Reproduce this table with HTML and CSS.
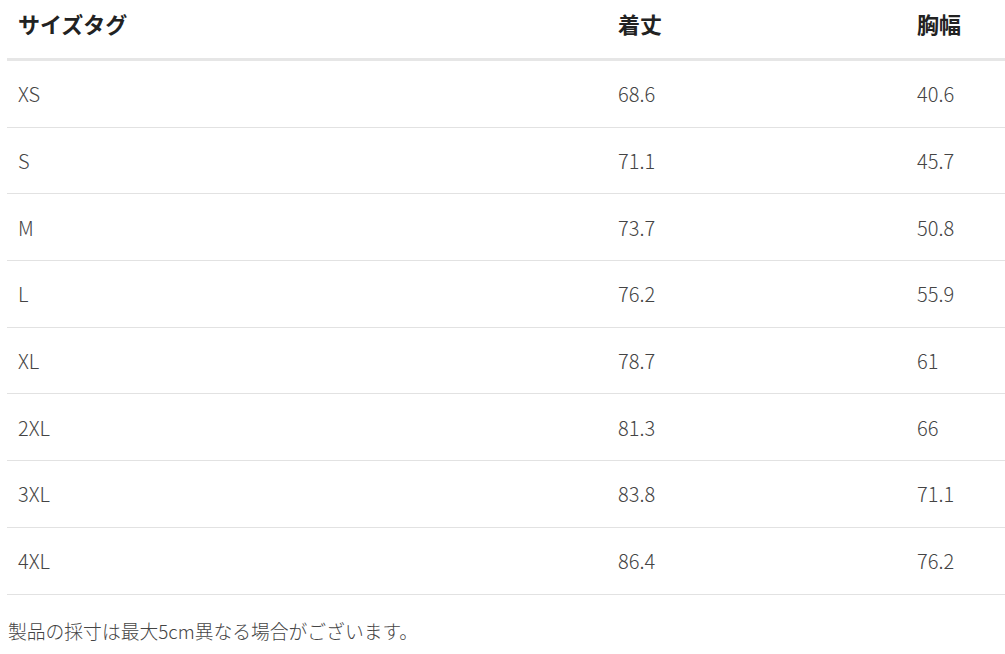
FILE: index.html
```html
<!DOCTYPE html>
<html lang="ja">
<head>
<meta charset="utf-8">
<link rel="stylesheet" href="styles.css">
</head>
<body>
<div class="wrap">
  <table class="size-table">
    <thead>
      <tr><th class="c1">サイズタグ</th><th class="c2">着丈</th><th class="c3">胸幅</th></tr>
    </thead>
    <tbody>
      <tr><td>XS</td><td>68.6</td><td>40.6</td></tr>
      <tr><td>S</td><td>71.1</td><td>45.7</td></tr>
      <tr><td>M</td><td>73.7</td><td>50.8</td></tr>
      <tr><td>L</td><td>76.2</td><td>55.9</td></tr>
      <tr><td>XL</td><td>78.7</td><td>61</td></tr>
      <tr><td>2XL</td><td>81.3</td><td>66</td></tr>
      <tr><td>3XL</td><td>83.8</td><td>71.1</td></tr>
      <tr><td>4XL</td><td>86.4</td><td>76.2</td></tr>
    </tbody>
  </table>
  <p class="note">製品の採寸は最大5cm異なる場合がございます。</p>
</div>
</body>
</html>
```
FILE: styles.css
```css
html, body {
  margin: 0;
  padding: 0;
  background: #fff;
  overflow: hidden;
}
body {
  font-family: "Noto Sans CJK JP", "Noto Sans", sans-serif;
  color: #555;
}
.wrap {
  padding-left: 7px;
}
.size-table {
  width: 998px;
  border-collapse: collapse;
  table-layout: fixed;
}
.c1 { width: 589px; }
.c2 { width: 288px; }
.c3 { width: 88px; }
.size-table th {
  text-align: left;
  font-size: 22px;
  font-weight: 700;
  color: #222;
  height: 46px;
  padding: 0 0 12px 11px;
  border-bottom: 3px solid #e6e6e6;
  vertical-align: middle;
}
.size-table td {
  font-size: 20px;
  font-weight: 300;
  color: #444;
  height: 65.7px;
  padding: 0 0 0 11px;
  border-bottom: 1px solid #e2e2e2;
  vertical-align: middle;
}
.note {
  margin: 22px 0 0 1px;
  font-size: 18.8px;
  font-weight: 300;
  color: #444;
}
```
